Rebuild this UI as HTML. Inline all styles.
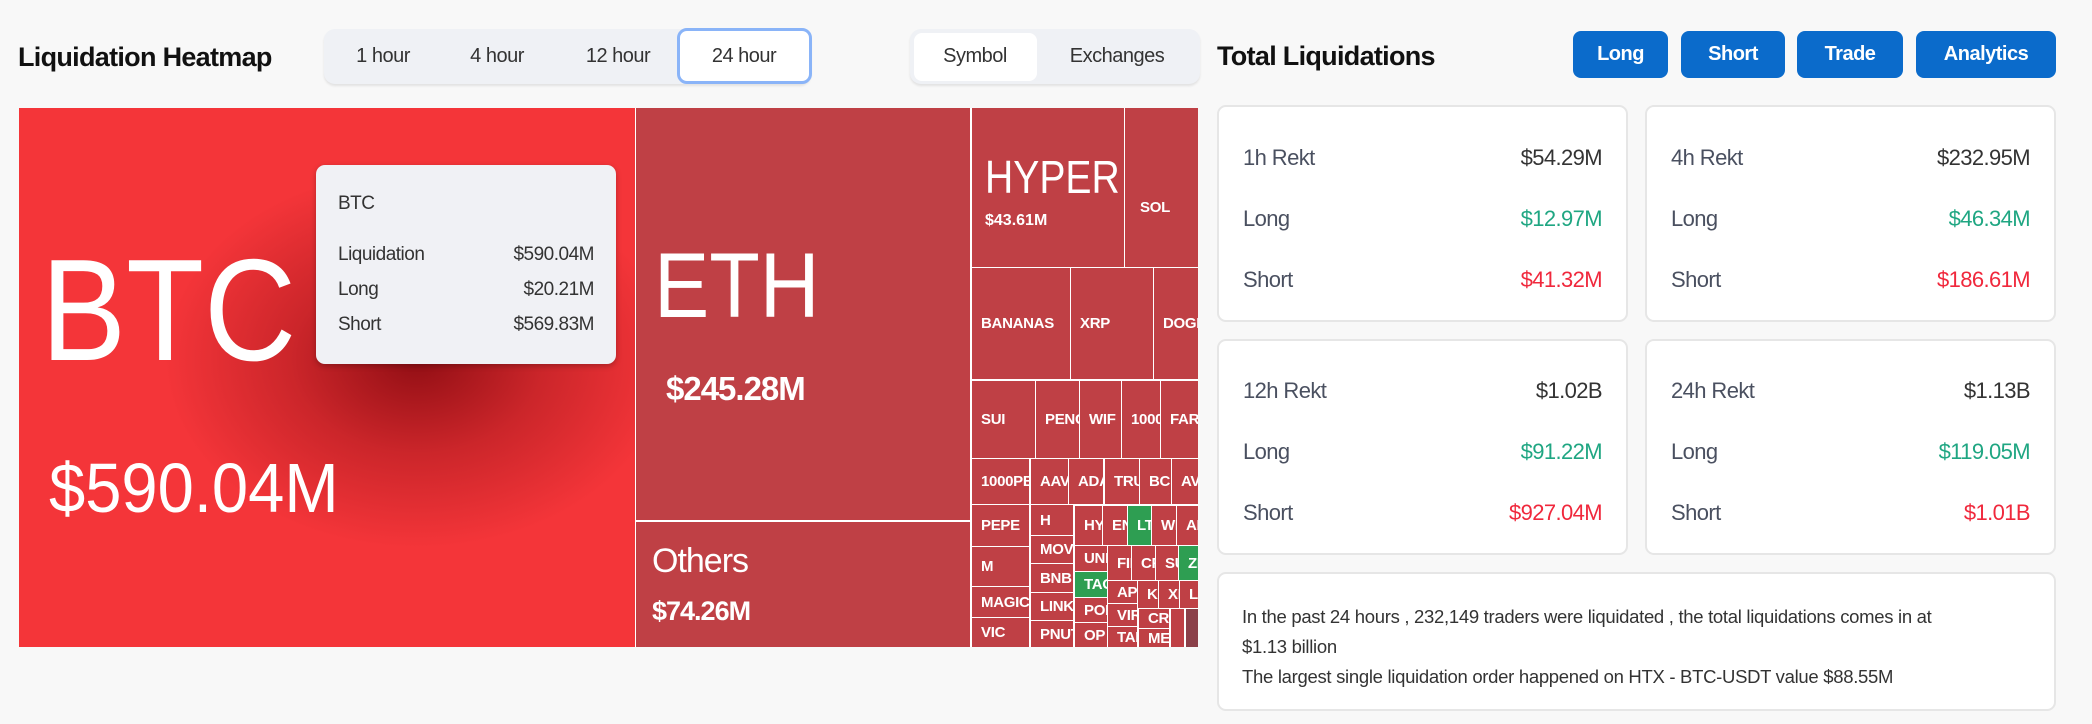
<!DOCTYPE html>
<html><head><meta charset="utf-8"><style>
*{box-sizing:border-box;margin:0;padding:0}
body{width:2092px;height:724px;background:#f8f8f8;font-family:"Liberation Sans",sans-serif;position:relative;overflow:hidden;color:#222}
.a{position:absolute}
.c{position:absolute;background:#bf4045;color:#fff;overflow:hidden;font-size:15px;font-weight:bold;display:flex;align-items:center;padding-left:9px;white-space:nowrap;letter-spacing:-0.3px}
.g{background:#2e9e52}
.seg{position:absolute;font-size:20px;color:#333;text-align:center;transform:translateX(-50%);letter-spacing:-0.5px}
.btn{position:absolute;top:31px;height:47px;background:#0b6bcb;color:#fff;font-weight:bold;font-size:20px;border-radius:8px;display:flex;align-items:center;justify-content:center;letter-spacing:-0.5px}
.card{position:absolute;background:#fff;border:2px solid #e6e6e6;border-radius:9px}
.row{position:absolute;left:24px;right:24px;display:flex;justify-content:space-between;font-size:22px;color:#4a5060;line-height:26px;letter-spacing:-0.6px}
.row b{font-weight:normal;color:#333}
.gr{color:#1fa682!important}.rd{color:#f0283c!important}
.tt{position:absolute;left:22px;right:22px;display:flex;justify-content:space-between;font-size:19px;color:#333;letter-spacing:-0.5px}
</style></head><body>
<div class="a" style="left:18px;top:42px;font-size:27px;font-weight:bold;color:#111;letter-spacing:-0.7px">Liquidation Heatmap</div>
<div class="a" style="left:324px;top:29px;width:487px;height:55px;background:#eff1f5;border-radius:11px;box-shadow:0 2px 2px #e2e2e2"></div>
<div class="a" style="left:677px;top:28px;width:135px;height:56px;background:#fff;border:3px solid #8ab4f8;border-radius:10px"></div>
<div class="seg" style="left:383px;top:45px">1 hour</div>
<div class="seg" style="left:497px;top:45px">4 hour</div>
<div class="seg" style="left:618px;top:45px">12 hour</div>
<div class="seg" style="left:744px;top:45px">24 hour</div>
<div class="a" style="left:910px;top:29px;width:290px;height:55px;background:#eff1f5;border-radius:11px;box-shadow:0 2px 2px #e2e2e2"></div>
<div class="a" style="left:914px;top:33px;width:123px;height:48px;background:#fff;border-radius:8px"></div>
<div class="seg" style="left:975px;top:45px">Symbol</div>
<div class="seg" style="left:1117px;top:45px">Exchanges</div>

<!-- heatmap -->
<div class="a" style="left:19px;top:108px;width:1179px;height:539px;background:#fff"></div>
<div class="a" style="left:19px;top:108px;width:616px;height:539px;background:#f43539;overflow:hidden">
 <div class="a" style="left:90px;top:20px;width:560px;height:420px;background:radial-gradient(closest-side at 55% 55%,rgba(140,12,18,.95),rgba(170,25,30,.55) 50%,rgba(244,53,57,0) 100%)"></div>
 <div class="a" style="left:22px;top:130px;font-size:145px;color:#fff;line-height:1;transform:scaleX(.88);transform-origin:left">BTC</div>
 <div class="a" style="left:30px;top:345px;font-size:70px;color:#fff;line-height:1;transform:scaleX(.93);transform-origin:left">$590.04M</div>
</div>
<div class="a" style="left:316px;top:165px;width:300px;height:199px;background:#f0f1f5;border-radius:9px;box-shadow:0 2px 6px rgba(0,0,0,.25)">
 <div class="tt" style="top:28px">BTC</div>
 <div class="tt" style="top:79px"><span>Liquidation</span><span>$590.04M</span></div>
 <div class="tt" style="top:114px"><span>Long</span><span>$20.21M</span></div>
 <div class="tt" style="top:149px"><span>Short</span><span>$569.83M</span></div>
</div>
<div class="a" style="left:636px;top:108px;width:334px;height:412px;background:#bf4045;color:#fff">
 <div class="a" style="left:18px;top:132px;font-size:92px;line-height:1;transform:scaleX(.9);transform-origin:left">ETH</div>
 <div class="a" style="left:30px;top:262px;font-size:33px;font-weight:bold;letter-spacing:-1px">$245.28M</div>
</div>
<div class="a" style="left:636px;top:522px;width:334px;height:125px;background:#bf4045;color:#fff">
 <div class="a" style="left:16px;top:20px;font-size:34px;letter-spacing:-1px">Others</div>
 <div class="a" style="left:16px;top:74px;font-size:27px;font-weight:bold;letter-spacing:-1px">$74.26M</div>
</div>
<div class="a" style="left:972px;top:108px;width:152px;height:159px;background:#bf4045;color:#fff;overflow:hidden">
 <div class="a" style="left:13px;top:46px;font-size:46px;line-height:1;transform:scaleX(.85);transform-origin:left">HYPER</div>
 <div class="a" style="left:13px;top:104px;font-size:16px;font-weight:bold">$43.61M</div>
</div>
<div class="c" style="left:1125px;top:108px;width:73px;height:159px;padding-left:15px;padding-top:40px">SOL</div>
<div class="c" style="left:972px;top:268px;width:98px;height:111px">BANANAS</div>
<div class="c" style="left:1071px;top:268px;width:82px;height:111px">XRP</div>
<div class="c" style="left:1154px;top:268px;width:44px;height:111px">DOGE</div>
<div class="c" style="left:972px;top:381px;width:63px;height:77px">SUI</div>
<div class="c" style="left:1036px;top:381px;width:43px;height:77px">PENGU</div>
<div class="c" style="left:1080px;top:381px;width:41px;height:77px">WIF</div>
<div class="c" style="left:1122px;top:381px;width:38px;height:77px">1000</div>
<div class="c" style="left:1161px;top:381px;width:37px;height:77px">FART</div>
<div class="c" style="left:972px;top:459px;width:57px;height:45px">1000PEPE</div>
<div class="c" style="left:1031px;top:459px;width:37px;height:45px">AAVE</div>
<div class="c" style="left:1069px;top:459px;width:34px;height:45px">ADA</div>
<div class="c" style="left:1105px;top:459px;width:34px;height:45px">TRUMP</div>
<div class="c" style="left:1140px;top:459px;width:31px;height:45px">BCH</div>
<div class="c" style="left:1172px;top:459px;width:26px;height:45px">AVAX</div>
<div class="c" style="left:972px;top:505px;width:57px;height:41px">PEPE</div>
<div class="c" style="left:972px;top:547px;width:57px;height:39px">M</div>
<div class="c" style="left:972px;top:587px;width:57px;height:30px">MAGIC</div>
<div class="c" style="left:972px;top:618px;width:57px;height:29px">VIC</div>
<div class="c" style="left:1031px;top:505px;width:42px;height:30px">H</div>
<div class="c" style="left:1031px;top:536px;width:42px;height:27px">MOVE</div>
<div class="c" style="left:1031px;top:564px;width:42px;height:28px">BNB</div>
<div class="c" style="left:1031px;top:593px;width:42px;height:27px">LINK</div>
<div class="c" style="left:1031px;top:621px;width:42px;height:26px">PNUT</div>
<div class="c" style="left:1075px;top:506px;width:27px;height:39px">HYPE</div>
<div class="c" style="left:1103px;top:506px;width:24px;height:39px">ENA</div>
<div class="c g" style="left:1128px;top:506px;width:23px;height:39px">LTC</div>
<div class="c" style="left:1152px;top:506px;width:24px;height:39px">WLD</div>
<div class="c" style="left:1177px;top:506px;width:21px;height:39px">ARB</div>
<div class="c" style="left:1075px;top:546px;width:32px;height:25px">UNI</div>
<div class="c g" style="left:1075px;top:572px;width:32px;height:25px">TAO</div>
<div class="c" style="left:1075px;top:598px;width:32px;height:24px">POL</div>
<div class="c" style="left:1075px;top:623px;width:32px;height:24px">OP</div>
<div class="c" style="left:1108px;top:546px;width:23px;height:34px">FIL</div>
<div class="c" style="left:1132px;top:546px;width:23px;height:34px">CRV</div>
<div class="c" style="left:1156px;top:546px;width:22px;height:34px">SUI</div>
<div class="c g" style="left:1179px;top:546px;width:19px;height:34px">ZEC</div>
<div class="c" style="left:1108px;top:581px;width:29px;height:22px">APT</div>
<div class="c" style="left:1138px;top:581px;width:20px;height:27px">KAITO</div>
<div class="c" style="left:1159px;top:581px;width:20px;height:27px">XLM</div>
<div class="c" style="left:1180px;top:581px;width:18px;height:27px">LDO</div>
<div class="c" style="left:1108px;top:604px;width:29px;height:22px">VIRTUAL</div>
<div class="c" style="left:1108px;top:627px;width:29px;height:20px">TAI</div>
<div class="c" style="left:1139px;top:609px;width:30px;height:19px">CRO</div>
<div class="c" style="left:1139px;top:629px;width:30px;height:18px">MEW</div>
<div class="c" style="left:1171px;top:609px;width:13px;height:38px"></div>
<div class="c" style="left:1186px;top:609px;width:12px;height:38px;background:#8b4049"></div>

<!-- right -->
<div class="a" style="left:1217px;top:41px;font-size:27px;font-weight:bold;color:#111;letter-spacing:-0.7px">Total Liquidations</div>
<div class="btn" style="left:1573px;width:95px">Long</div>
<div class="btn" style="left:1681px;width:104px">Short</div>
<div class="btn" style="left:1797px;width:106px">Trade</div>
<div class="btn" style="left:1916px;width:140px">Analytics</div>

<div class="card" style="left:1217px;top:105px;width:411px;height:217px">
 <div class="row" style="top:38px"><span>1h Rekt</span><b>$54.29M</b></div>
 <div class="row" style="top:99px"><span>Long</span><b class="gr">$12.97M</b></div>
 <div class="row" style="top:160px"><span>Short</span><b class="rd">$41.32M</b></div>
</div>
<div class="card" style="left:1645px;top:105px;width:411px;height:217px">
 <div class="row" style="top:38px"><span>4h Rekt</span><b>$232.95M</b></div>
 <div class="row" style="top:99px"><span>Long</span><b class="gr">$46.34M</b></div>
 <div class="row" style="top:160px"><span>Short</span><b class="rd">$186.61M</b></div>
</div>
<div class="card" style="left:1217px;top:339px;width:411px;height:216px">
 <div class="row" style="top:37px"><span>12h Rekt</span><b>$1.02B</b></div>
 <div class="row" style="top:98px"><span>Long</span><b class="gr">$91.22M</b></div>
 <div class="row" style="top:159px"><span>Short</span><b class="rd">$927.04M</b></div>
</div>
<div class="card" style="left:1645px;top:339px;width:411px;height:216px">
 <div class="row" style="top:37px"><span>24h Rekt</span><b>$1.13B</b></div>
 <div class="row" style="top:98px"><span>Long</span><b class="gr">$119.05M</b></div>
 <div class="row" style="top:159px"><span>Short</span><b class="rd">$1.01B</b></div>
</div>
<div class="card" style="left:1217px;top:572px;width:839px;height:139px">
 <div class="a" style="left:23px;top:28px;width:800px;font-size:18.5px;line-height:30px;color:#333;letter-spacing:-0.3px">In the past 24 hours , 232,149 traders were liquidated , the total liquidations comes in at<br>$1.13 billion<br>The largest single liquidation order happened on HTX - BTC-USDT value $88.55M</div>
</div>
</body></html>
